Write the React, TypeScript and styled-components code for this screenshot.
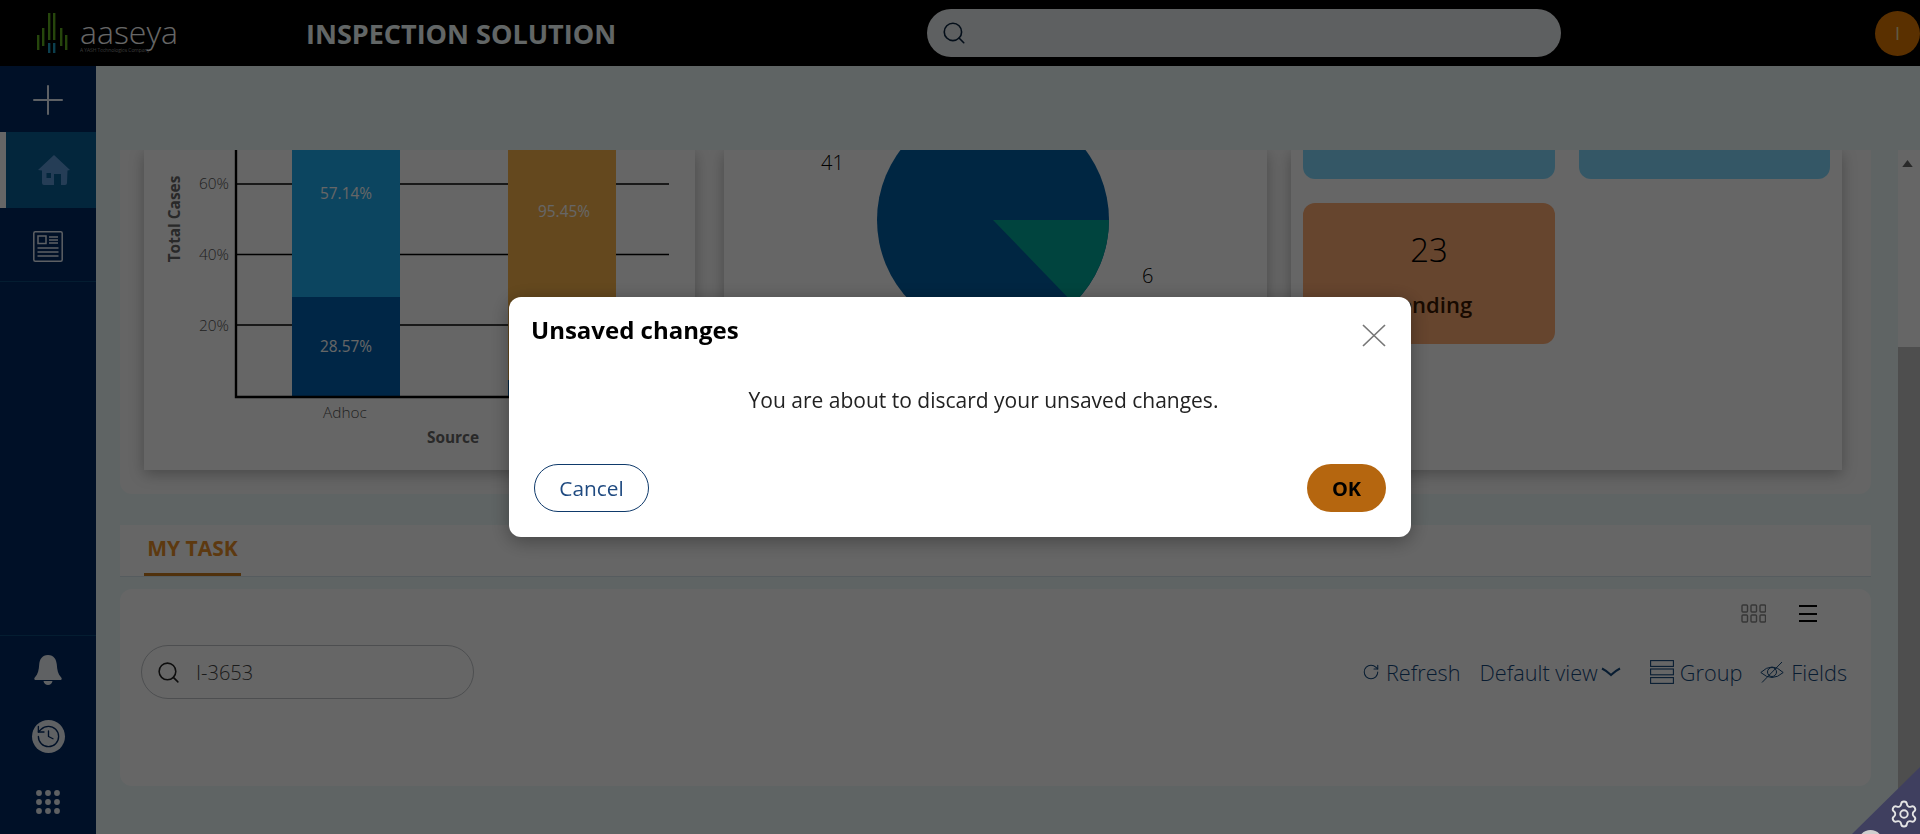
import React from "react";
import styled, { createGlobalStyle } from "styled-components";
import { Search, Settings, History, RotateCw, Plus } from "lucide-react";

const Global = createGlobalStyle`
  html, body { margin: 0; padding: 0; height: 100%; overflow: hidden; }
  body { font-family: "Open Sans", "Liberation Sans", sans-serif; background: #eefafa; }
  * { box-sizing: border-box; }
`;

const Page = styled.div`
  width: 1920px;
  height: 834px;
  display: grid;
  grid-template-rows: 66px 768px;
  overflow: hidden;
`;

const Header = styled.header`
  background: #000;
  display: flex;
  align-items: center;
  padding-left: 37px;
`;

const LogoWrap = styled.div`
  display: flex;
  width: 269px;
  height: 40px;
  align-items: flex-start;
  gap: 11px;
`;

const LogoWord = styled.div`
  display: flex;
  flex-direction: column;
  color: #fff;
  font-size: 32px;
  font-weight: 300;
  line-height: 32px;
  padding-top: 3px;
`;

const LogoTag = styled.span`
  font-size: 5px;
  line-height: 5px;
  color: #ddd;
  white-space: nowrap;
`;

const AppTitle = styled.h1`
  margin: 0;
  width: 621px;
  font-size: 27px;
  font-weight: 700;
  color: #f5ffff;
  white-space: nowrap;
`;

const TopSearch = styled.div`
  width: 634px;
  height: 48px;
  border-radius: 24px;
  background: #ecf0f2;
  display: flex;
  align-items: center;
  padding-left: 14px;
  color: #0a2540;
`;

const Avatar = styled.div`
  margin-left: auto;
  width: 45px;
  height: 45px;
  border-radius: 50%;
  background: #e07800;
  color: #f0e0b0;
  display: flex;
  align-items: center;
  justify-content: center;
  font-size: 18px;
`;

const Body = styled.div`
  display: flex;
  min-height: 0;
`;

const Sidebar = styled.nav`
  width: 96px;
  flex: none;
  background: #002a62;
  display: flex;
  flex-direction: column;
`;

const SideItem = styled.div<{ $h: number; $active?: boolean; $line?: boolean; $pt?: number }>`
  height: ${(p) => p.$h}px;
  padding-top: ${(p) => p.$pt ?? 0}px;
  display: flex;
  align-items: center;
  justify-content: center;
  background: ${(p) => (p.$active ? "#085f96" : "transparent")};
  border-bottom: ${(p) => (p.$line ? "1px solid #0a4a7a" : "none")};
  border-left: ${(p) => (p.$active ? "6px solid #fff" : "none")};
  color: #e8f0fa;
`;

const SideSpacer = styled.div`
  flex: 1;
`;

const SideBottom = styled.div`
  border-top: 1px solid #0a4a7a;
`;

const Main = styled.main`
  flex: 1;
  display: flex;
  min-width: 0;
`;

const Content = styled.div`
  margin-left: 24px;
  width: 1751px;
  padding-top: 84px;
  display: flex;
  flex-direction: column;
`;

const ChartsPanel = styled.section`
  height: 344px;
  background: #fcfcfc;
  border-radius: 0 0 12px 12px;
  display: flex;
  padding-left: 24px;
  overflow: hidden;
`;

const ChartCard = styled.div<{ $w: number; $gap: number }>`
  width: ${(p) => p.$w}px;
  margin-right: ${(p) => p.$gap}px;
  height: 320px;
  background: #fff;
  box-shadow: 0 4px 14px rgba(0, 0, 0, 0.28);
  flex: none;
`;

const TileCard = styled(ChartCard)`
  padding: 0 12px;
  display: grid;
  grid-template-columns: 252px 251px;
  grid-template-rows: 29px 141px;
  gap: 24px;
`;

const TileStub = styled.div`
  background: #82daff;
  border-radius: 0 0 12px 12px;
`;

const Tile = styled.div`
  background: #ffac73;
  border-radius: 12px;
  display: flex;
  flex-direction: column;
  align-items: center;
  color: #000;
`;

const TileNum = styled.div`
  font-size: 33px;
  font-weight: 300;
  line-height: 46px;
  margin-top: 24px;
`;

const TileLabel = styled.div`
  font-size: 22px;
  font-weight: 600;
  line-height: 30px;
  margin-top: 16px;
  color: #3a1800;
`;

const TabBar = styled.div`
  margin-top: 31px;
  height: 52px;
  background: #fff;
  border-bottom: 1px solid #d8e6ee;
  display: flex;
  padding-left: 24px;
`;

const Tab = styled.div`
  width: 97px;
  height: 51px;
  border-bottom: 3px solid #c87a20;
  color: #e8902a;
  font-size: 21px;
  font-weight: 700;
  display: flex;
  justify-content: center;
  padding-top: 9px;
  white-space: nowrap;
`;

const TaskCard = styled.section`
  margin-top: 12px;
  height: 197px;
  background: #fff;
  border-radius: 12px;
  padding: 15px 24px 0 21px;
`;

const ViewIcons = styled.div`
  display: flex;
  justify-content: flex-end;
  align-items: center;
  gap: 33px;
  height: 19px;
  padding-right: 30px;
`;

const Hamburger = styled.div`
  width: 18px;
  height: 17px;
  border-top: 2px solid #000;
  border-bottom: 2px solid #000;
  display: flex;
  align-items: center;
  &::before {
    content: "";
    display: block;
    width: 100%;
    height: 2px;
    background: #000;
  }
`;

const TaskRow = styled.div`
  display: flex;
  align-items: center;
  justify-content: space-between;
  margin-top: 22px;
`;

const TaskSearch = styled.div`
  width: 333px;
  height: 54px;
  border: 1px solid #c0c4c8;
  border-radius: 27px;
  display: flex;
  align-items: center;
  gap: 15px;
  padding-left: 14px;
  color: #444;
  font-size: 20px;
  font-weight: 300;
`;

const Actions = styled.div`
  display: flex;
  align-items: center;
  color: #14487c;
  font-size: 21.7px;
  font-weight: 300;
`;

const Action = styled.div<{ $gap?: number; $after?: number }>`
  display: flex;
  align-items: center;
  gap: ${(p) => p.$gap ?? 6}px;
  margin-right: ${(p) => p.$after ?? 0}px;
  white-space: nowrap;
`;

const ScrollTrack = styled.div`
  margin-left: 27px;
  margin-top: 84px;
  width: 22px;
  background: #fff;
  display: flex;
  flex-direction: column;
  align-items: center;
  padding-top: 10px;
`;

const ScrollArrow = styled.svg`
  margin-right: 4px;
  flex: none;
`;

const ScrollThumb = styled.div`
  margin-top: 180px;
  width: 100%;
  flex: 1;
  background: #c4c4c4;
`;

const Overlay = styled.div`
  position: fixed;
  inset: 0;
  background: rgba(0, 0, 0, 0.6);
  display: flex;
  align-items: center;
  justify-content: center;
  z-index: 10;
`;

const Dialog = styled.div`
  width: 902px;
  height: 240px;
  background: #fff;
  border-radius: 12px;
  box-shadow: 0 4px 20px rgba(0, 0, 0, 0.35);
  display: flex;
  flex-direction: column;
`;

const DialogHead = styled.div`
  height: 60px;
  display: flex;
  justify-content: space-between;
  padding: 17px 25px 0 22px;
`;

const DialogTitle = styled.h2`
  margin: 0;
  font-size: 24px;
  line-height: 32px;
  font-weight: 700;
  color: #000;
`;

const CloseIcon = styled.svg`
  margin-top: 10px;
  flex: none;
`;

const DialogBody = styled.div`
  height: 86px;
  display: flex;
  align-items: center;
  justify-content: center;
  padding-left: 47px;
  font-size: 21px;
  color: #222;
`;

const DialogFoot = styled.div`
  margin-top: auto;
  display: flex;
  justify-content: space-between;
  padding: 0 25px 25px;
`;

const CancelBtn = styled.button`
  width: 115px;
  height: 48px;
  border-radius: 24px;
  border: 1px solid #0f3a6b;
  background: #fff;
  color: #1f4a80;
  font: 400 20.8px "Open Sans", sans-serif;
`;

const OkBtn = styled.button`
  width: 79px;
  height: 48px;
  border-radius: 24px;
  border: none;
  background: #b5660f;
  color: #000;
  font: 700 20px "Open Sans", sans-serif;
`;

const Corner = styled.div`
  position: fixed;
  right: 0;
  bottom: 0;
  width: 68px;
  height: 67px;
  background: #3f3f5f;
  clip-path: polygon(100% 0, 100% 100%, 0 100%);
  z-index: 20;
  color: #e4e4e4;
`;

const CornerGear = styled.div`
  position: absolute;
  right: 1px;
  bottom: 5px;
  display: flex;
`;

const CornerBubble = styled.div`
  position: absolute;
  left: 6px;
  top: 63px;
  width: 25px;
  height: 25px;
  border-radius: 50%;
  background: #cfcfcf;
`;

const Logo = () => (
  <svg width="32" height="40" viewBox="0 0 32 40">
    <g fill="#5fb01e">
      <rect x="0" y="22" width="2.4" height="15" />
      <rect x="5" y="15" width="2.4" height="18" />
      <rect x="11" y="0" width="2.4" height="27" />
      <rect x="16" y="0" width="2.4" height="27" />
      <rect x="23" y="15" width="2.4" height="18" />
      <rect x="28" y="22" width="2.4" height="15" />
    </g>
    <g fill="#1f9fc4">
      <rect x="11" y="30" width="2.4" height="10" />
      <rect x="16" y="30" width="2.4" height="10" />
    </g>
  </svg>
);

const HomeIcon = () => (
  <svg width="32" height="30" viewBox="0 0 32 30" fill="#5e9ad8" style={{ marginLeft: 6 }}>
    <path fillRule="evenodd" d="M16 0 L32 15 L29.5 15.5 L29 28 Q29 30 27 30 L23 30 L23 19 L16 19 L16 30 L6 30 Q4 30 4 28 L4 15.5 L0 15 Z M8.5 18 L8.5 23 L13 23 L13 18 Z" />
  </svg>
);

const NewsIcon = () => (
  <svg width="30" height="31" viewBox="0 0 30 31" fill="none" stroke="#e8f0fa" strokeWidth="1.5">
    <rect x="0.8" y="0.8" width="28.4" height="29.4" rx="1.5" />
    <rect x="5" y="5" width="8" height="7.5" />
    <path d="M16 6h9M16 9h9M16 12h9M4.5 17h21M4.5 21h21M4.5 25h21" />
  </svg>
);

const BellIcon = () => (
  <svg width="28" height="30" viewBox="0 0 28 30" fill="#eef2f8">
    <path d="M14 0C8 0 5.6 4.5 5.2 9.5 4.9 15 4 19 1 22.2 -0.3 23.6 0.2 25 2 25H26C27.8 25 28.3 23.6 27 22.2 24 19 23.1 15 22.8 9.5 22.4 4.5 20 0 14 0Z" />
    <path d="M9.5 26H18.5C18 28.6 16.2 30 14 30S10 28.6 9.5 26Z" />
  </svg>
);

const HistoryDisc = styled.div`
  width: 33px;
  height: 33px;
  border-radius: 50%;
  background: #eef2f8;
  color: #002a62;
  display: flex;
  align-items: center;
  justify-content: center;
`;

const DotsIcon = () => (
  <svg width="24" height="24" viewBox="0 0 24 24" fill="#eef2f8">
    {[3, 12, 21].map((y) =>
      [3, 12, 21].map((x) => <circle key={`${x}-${y}`} cx={x} cy={y} r="2.9" />)
    )}
  </svg>
);

const GridIcon = () => (
  <svg width="25" height="19" viewBox="0 0 25 19" fill="none" stroke="#888" strokeWidth="1.4">
    {[1, 11].map((y) =>
      [1, 10, 19].map((x) => <rect key={`${x}-${y}`} x={x} y={y} width="5.5" height="7" rx="1" />)
    )}
  </svg>
);

const GroupIcon = () => (
  <svg width="24" height="24" viewBox="0 0 24 24" fill="none" stroke="#14487c" strokeWidth="1.1">
    <rect x="0.6" y="0.6" width="22.8" height="5.8" />
    <rect x="0.6" y="9" width="22.8" height="5.8" />
    <rect x="0.6" y="17.6" width="22.8" height="5.8" />
  </svg>
);

const EyeSlashIcon = () => (
  <svg width="24" height="22" viewBox="0 0 24 22" fill="none" stroke="#14487c" strokeWidth="1">
    <path d="M0.8 11.5Q12 0.5 23.2 11.5Q12 21.5 0.8 11.5Z" />
    <circle cx="12" cy="11" r="4.5" />
    <path d="M2 21.5L22 1" />
  </svg>
);

const ChevronIcon = () => (
  <svg width="20" height="10" viewBox="0 0 20 10" fill="none" stroke="#14487c" strokeWidth="2">
    <path d="M1 1.5Q6 4 10 8Q14 4 19 1.5" />
  </svg>
);

const BarChart = () => (
  <svg width="551" height="320" viewBox="0 0 551 320" fontFamily="Open Sans, sans-serif">
    {[34, 104.5, 175].map((y) => (
      <line key={y} x1="92" x2="525" y1={y} y2={y} stroke="#000" strokeWidth="1.4" />
    ))}
    <rect x="148" y="0" width="108" height="147" fill="#1eacf0" />
    <rect x="148" y="147" width="108" height="100" fill="#005fae" />
    <rect x="364" y="0" width="108" height="230" fill="#fab44b" />
    <rect x="364" y="230" width="108" height="17" fill="#005fae" />
    <path d="M92 0V247H525" fill="none" stroke="#000" strokeWidth="2.4" />
    <g fontSize="15.4" fill="#fff" textAnchor="middle">
      <text x="202" y="49">57.14%</text>
      <text x="420" y="67">95.45%</text>
      <text x="202" y="202">28.57%</text>
    </g>
    <g fontSize="15.4" fontWeight="300" fill="#555" textAnchor="end">
      <text x="85" y="39">60%</text>
      <text x="85" y="110">40%</text>
      <text x="85" y="181">20%</text>
    </g>
    <text x="201" y="268" fontSize="15.4" fontWeight="300" fill="#555" textAnchor="middle">Adhoc</text>
    <text x="309" y="293" fontSize="15.4" fontWeight="700" fill="#666" textAnchor="middle">Source</text>
    <text transform="translate(36 69) rotate(-90)" fontSize="15.4" fontWeight="700" fill="#666" textAnchor="middle">Total Cases</text>
  </svg>
);

const PieChart = () => (
  <svg width="543" height="320" viewBox="0 0 543 320" fontFamily="Open Sans, sans-serif">
    <circle cx="269" cy="70" r="116" fill="#005fa5" />
    <path d="M269 70H385A116 116 0 0 1 349.6 153.4Z" fill="#00aa9b" />
    <g fontSize="20" fontWeight="300" fill="#000">
      <text x="97" y="20">41</text>
      <text x="418" y="133">6</text>
    </g>
  </svg>
);

export default function App() {
  return (
    <>
      <Global />
      <Page>
        <Header>
          <LogoWrap>
            <Logo />
            <LogoWord>
              aaseya
              <LogoTag>A YASH Technologies Company</LogoTag>
            </LogoWord>
          </LogoWrap>
          <AppTitle>INSPECTION SOLUTION</AppTitle>
          <TopSearch>
            <Search size={26} strokeWidth={1.5} />
          </TopSearch>
          <Avatar>I</Avatar>
        </Header>
        <Body>
          <Sidebar>
            <SideItem $h={66} $pt={2}>
              <Plus size={48} strokeWidth={1} />
            </SideItem>
            <SideItem $h={76} $active>
              <HomeIcon />
            </SideItem>
            <SideItem $h={74} $line $pt={4}>
              <NewsIcon />
            </SideItem>
            <SideSpacer />
            <SideBottom>
              <SideItem $h={67}>
                <BellIcon />
              </SideItem>
              <SideItem $h={66}>
                <HistoryDisc>
                  <History size={27} strokeWidth={1.2} />
                </HistoryDisc>
              </SideItem>
              <SideItem $h={65}>
                <DotsIcon />
              </SideItem>
            </SideBottom>
          </Sidebar>
          <Main>
            <Content>
              <ChartsPanel>
                <ChartCard $w={551} $gap={29}>
                  <BarChart />
                </ChartCard>
                <ChartCard $w={543} $gap={24}>
                  <PieChart />
                </ChartCard>
                <TileCard $w={551} $gap={0}>
                  <TileStub />
                  <TileStub />
                  <Tile>
                    <TileNum>23</TileNum>
                    <TileLabel>Pending</TileLabel>
                  </Tile>
                </TileCard>
              </ChartsPanel>
              <TabBar>
                <Tab>MY TASK</Tab>
              </TabBar>
              <TaskCard>
                <ViewIcons>
                  <GridIcon />
                  <Hamburger />
                </ViewIcons>
                <TaskRow>
                  <TaskSearch>
                    <Search size={25} strokeWidth={1.5} color="#222" />
                    I-3653
                  </TaskSearch>
                  <Actions>
                    <Action $after={19}>
                      <RotateCw size={18} strokeWidth={1.4} />
                      Refresh
                    </Action>
                    <Action $gap={3} $after={29}>
                      Default view
                      <ChevronIcon />
                    </Action>
                    <Action $after={18}>
                      <GroupIcon />
                      Group
                    </Action>
                    <Action $gap={7}>
                      <EyeSlashIcon />
                      Fields
                    </Action>
                  </Actions>
                </TaskRow>
              </TaskCard>
            </Content>
            <ScrollTrack>
              <ScrollArrow width="11" height="7" viewBox="0 0 12 8">
                <path d="M6 0L12 8H0Z" fill="#666" />
              </ScrollArrow>
              <ScrollThumb />
            </ScrollTrack>
          </Main>
        </Body>
      </Page>
      <Overlay>
        <Dialog>
          <DialogHead>
            <DialogTitle>Unsaved changes</DialogTitle>
            <CloseIcon width="24" height="23" viewBox="0 0 24 23" stroke="#777" strokeWidth="1.7" fill="none">
              <path d="M1 1L23 22M23 1L1 22" />
            </CloseIcon>
          </DialogHead>
          <DialogBody>You are about to discard your unsaved changes.</DialogBody>
          <DialogFoot>
            <CancelBtn>Cancel</CancelBtn>
            <OkBtn>OK</OkBtn>
          </DialogFoot>
        </Dialog>
      </Overlay>
      <Corner>
        <CornerBubble />
        <CornerGear>
          <Settings size={30} strokeWidth={1.5} />
        </CornerGear>
      </Corner>
    </>
  );
}
